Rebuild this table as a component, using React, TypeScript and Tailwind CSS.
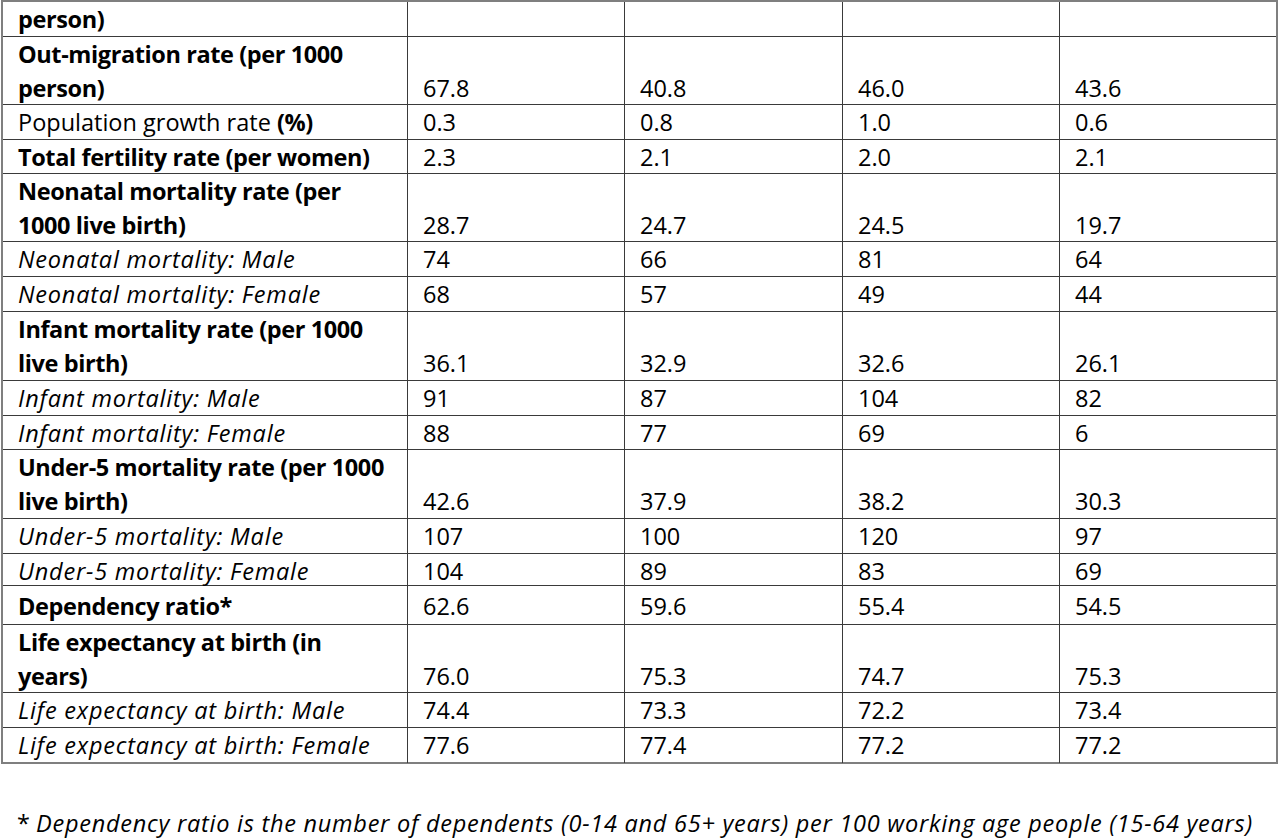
type Row = {
  label: string[];
  style: "bold" | "italic" | "mixed";
  values: string[];
  h: string;
};

// heights include the 1px top rule of each row
const rows: Row[] = [
  { label: ["person)"], style: "bold", values: ["", "", "", ""], h: "h-[34px]" },
  { label: ["Out-migration rate (per 1000", "person)"], style: "bold", values: ["67.8", "40.8", "46.0", "43.6"], h: "h-[68px]" },
  { label: ["Population growth rate"], style: "mixed", values: ["0.3", "0.8", "1.0", "0.6"], h: "h-[35px]" },
  { label: ["Total fertility rate (per women)"], style: "bold", values: ["2.3", "2.1", "2.0", "2.1"], h: "h-[34px]" },
  { label: ["Neonatal mortality rate (per", "1000 live birth)"], style: "bold", values: ["28.7", "24.7", "24.5", "19.7"], h: "h-[68px]" },
  { label: ["Neonatal mortality: Male"], style: "italic", values: ["74", "66", "81", "64"], h: "h-[35px]" },
  { label: ["Neonatal mortality: Female"], style: "italic", values: ["68", "57", "49", "44"], h: "h-[35px]" },
  { label: ["Infant mortality rate (per 1000", "live birth)"], style: "bold", values: ["36.1", "32.9", "32.6", "26.1"], h: "h-[69px]" },
  { label: ["Infant mortality: Male"], style: "italic", values: ["91", "87", "104", "82"], h: "h-[35px]" },
  { label: ["Infant mortality: Female"], style: "italic", values: ["88", "77", "69", "6"], h: "h-[34px]" },
  { label: ["Under-5 mortality rate (per 1000", "live birth)"], style: "bold", values: ["42.6", "37.9", "38.2", "30.3"], h: "h-[69px]" },
  { label: ["Under-5 mortality: Male"], style: "italic", values: ["107", "100", "120", "97"], h: "h-[35px]" },
  { label: ["Under-5 mortality: Female"], style: "italic", values: ["104", "89", "83", "69"], h: "h-[32px]" },
  { label: ["Dependency ratio*"], style: "bold", values: ["62.6", "59.6", "55.4", "54.5"], h: "h-[39px]" },
  { label: ["Life expectancy at birth (in", "years)"], style: "bold", values: ["76.0", "75.3", "74.7", "75.3"], h: "h-[68px]" },
  { label: ["Life expectancy at birth: Male"], style: "italic", values: ["74.4", "73.3", "72.2", "73.4"], h: "h-[35px]" },
  { label: ["Life expectancy at birth: Female"], style: "italic", values: ["77.6", "77.4", "77.2", "77.2"], h: "h-[35px]" },
];

function Label({ row }: { row: Row }) {
  if (row.style === "mixed") {
    return (
      <span>
        {row.label[0]} <span className="font-bold tracking-[-0.4px]">(%)</span>
      </span>
    );
  }
  const cls = row.style === "bold" ? "font-bold tracking-[-0.4px]" : "italic tracking-[0.8px]";
  return (
    <span className={cls}>
      {row.label.map((line, i) => (
        <span key={i} className="block whitespace-nowrap">
          {line}
        </span>
      ))}
    </span>
  );
}

export default function App() {
  return (
    <div className="min-h-screen bg-white text-black font-['Open_Sans','Liberation_Sans',sans-serif] text-[23.5px] leading-[34px]">
      <div className="pl-px">
        <div className="w-[1277px] border-2 border-[#7f7f7f]">
          {rows.map((row, i) => (
            <div
              key={i}
              className={`grid grid-cols-[404px_217px_218px_217px_217px] ${row.h} ${i > 0 ? "border-t border-[#3a3a3a]" : ""}`}
            >
              <div className="flex items-end pl-[15px] pb-px overflow-visible">
                <Label row={row} />
              </div>
              {row.values.map((v, j) => (
                <div key={j} className="flex items-end border-l border-[#3a3a3a] pl-[15px] pb-px">
                  {v}
                </div>
              ))}
            </div>
          ))}
        </div>
        <p className="mt-[42px] pl-[16px] whitespace-nowrap">
          * <span className="italic tracking-[0.75px]">Dependency ratio is the number of dependents (0-14 and 65+ years) per 100 working age people (15-64 years)</span>
        </p>
      </div>
    </div>
  );
}
